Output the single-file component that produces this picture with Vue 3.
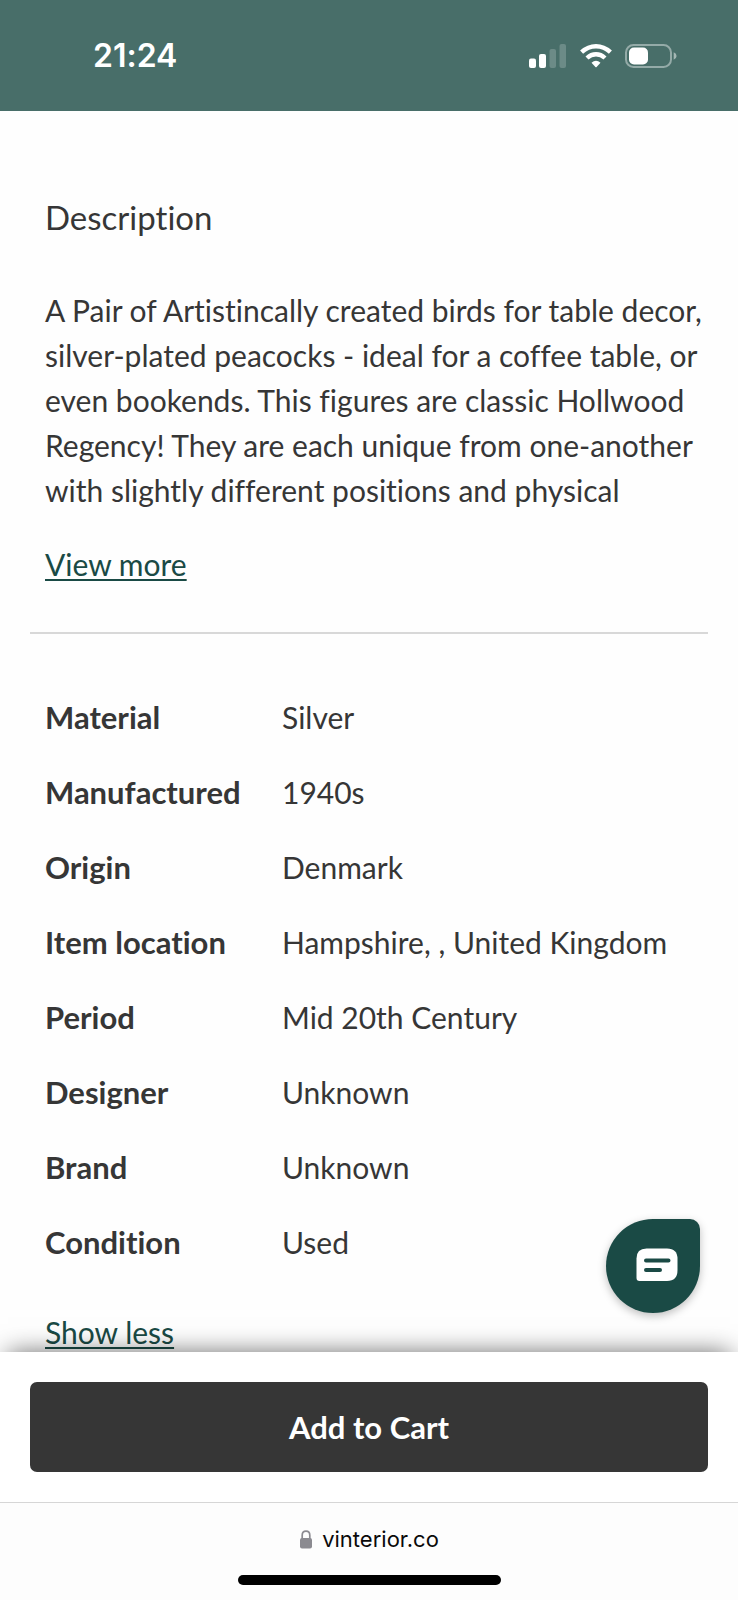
<script setup>
const details = [
  { label: 'Material', value: 'Silver' },
  { label: 'Manufactured', value: '1940s' },
  { label: 'Origin', value: 'Denmark' },
  { label: 'Item location', value: 'Hampshire, , United Kingdom' },
  { label: 'Period', value: 'Mid 20th Century' },
  { label: 'Designer', value: 'Unknown' },
  { label: 'Brand', value: 'Unknown' },
  { label: 'Condition', value: 'Used' },
]
</script>

<template>
  <div class="page">
    <header class="status">
      <time class="clock">21:24</time>
      <div class="indicators">
        <svg width="38" height="24" viewBox="0 0 38 24" fill="#fff" aria-label="Signal">
          <rect x="0" y="14.5" width="7" height="9.5" rx="2" />
          <rect x="10" y="10" width="7" height="14" rx="2" />
          <rect x="20.5" y="5" width="6.5" height="19" rx="2" opacity=".2" />
          <rect x="30.5" y="0" width="6.5" height="24" rx="2" opacity=".2" />
        </svg>
        <svg width="32" height="24" viewBox="0 0 32 24" aria-label="Wi-Fi">
          <g fill="none" stroke="#fff" stroke-width="4.4">
            <path d="M1.6 8.2Q8 2.2 16 2.2T30.4 8.2" />
            <path d="M7 14Q11 10.2 16 10.2T25 14" />
          </g>
          <path d="M11.5 18.7Q16 14.8 20.5 18.7L16.6 23Q16 23.5 15.4 23Z" fill="#fff" />
        </svg>
        <svg width="52" height="24" viewBox="0 0 52 24" aria-label="Battery">
          <rect x="1" y="1" width="45" height="22" rx="7.5" fill="none" stroke="#fff" stroke-opacity=".42" stroke-width="2" />
          <rect x="4" y="3.5" width="19" height="17" rx="5" fill="#fff" />
          <path d="M48.7 8.2Q51.6 9.5 51.6 12T48.7 15.8Z" fill="#fff" opacity=".5" />
        </svg>
      </div>
    </header>

    <main class="content">
      <section class="description">
        <h1>Description</h1>
        <p>
          A Pair of Artistincally created birds for table decor,<br />
          silver-plated peacocks - ideal for a coffee table, or<br />
          even bookends. This figures are classic Hollwood<br />
          Regency! They are each unique from one-another<br />
          with slightly different positions and physical
        </p>
        <a class="toggle" href="#">View more</a>
      </section>

      <section class="details">
        <table>
          <tbody>
            <tr v-for="row in details" :key="row.label">
              <th scope="row">{{ row.label }}</th>
              <td>{{ row.value }}</td>
            </tr>
          </tbody>
        </table>
        <a class="toggle" href="#">Show less</a>
      </section>
    </main>

    <button class="chat" type="button" aria-label="Open chat">
      <svg width="42" height="34" viewBox="0 0 42 34">
        <path d="M10.5 .5H31Q41.5 .5 41.5 11V22Q41.5 33 31 33H3.5Q.5 33 .5 30V10.5Q.5 .5 10.5 .5Z" fill="#fff" />
        <path d="M10 12.5H32.5M10 22H24" stroke="#1a4a45" stroke-width="4" stroke-linecap="round" />
      </svg>
    </button>

    <div class="purchase">
      <button class="add" type="button">Add to Cart</button>
    </div>

    <footer class="browser">
      <div class="address">
        <svg width="14" height="19" viewBox="0 0 14 19">
          <path d="M3.2 9V5.2Q3.2 1.2 7 1.2T10.8 5.2V9" fill="none" stroke="#8b8a90" stroke-width="1.7" />
          <rect x="1" y="8" width="12" height="10.5" rx="2" fill="#8b8a90" />
        </svg>
        <span>vinterior.co</span>
      </div>
      <div class="home"></div>
    </footer>
  </div>
</template>

<style>
body {
  margin: 0;
  background: #fefefe;
}
</style>

<style scoped>
.page {
  display: flex;
  flex-direction: column;
  min-height: 100vh;
  color: #363636;
  font-family: Lato, "Liberation Sans", sans-serif;
  font-size: 30px;
  line-height: 45px;
  font-variant-ligatures: none;
}
.status {
  box-sizing: border-box;
  height: 111px;
  padding: 0 61px 0 93px;
  display: flex;
  align-items: center;
  justify-content: space-between;
  background: #486e69;
  color: #fff;
}
.clock {
  font-family: Inter, sans-serif;
  font-size: 32px;
  font-weight: 600;
}
.indicators {
  display: flex;
  gap: 13px;
}
.indicators svg {
  display: block;
}
.content {
  flex: 1;
  padding: 0 30px;
}
.description {
  padding: 84px 15px 50px;
  border-bottom: 2px solid #d8d8d8;
}
h1 {
  margin: 0 0 49px;
  font-size: 33px;
  line-height: 44px;
  font-weight: 400;
}
p {
  margin: 0 0 33px;
  white-space: nowrap;
}
.toggle {
  display: block;
  width: fit-content;
  line-height: 36px;
  color: #1a4a45;
  text-decoration-thickness: 2px;
  text-underline-offset: 3px;
  text-decoration-skip-ink: none;
}
.details {
  padding: 46px 15px 0;
}
table {
  width: 100%;
  border-collapse: collapse;
}
th,
td {
  padding: 15px 0;
  text-align: left;
  font-weight: 400;
}
th {
  width: 237px;
  font-size: 31px;
  font-weight: 700;
}
.details .toggle {
  margin-top: 34px;
}
.chat {
  position: fixed;
  right: 38px;
  bottom: 287px;
  z-index: 2;
  width: 94px;
  height: 94px;
  padding: 0 0 2px 7px;
  border: 0;
  border-radius: 50% 10px 50% 50%;
  background: #1a4a45;
  box-shadow: 0 3px 8px rgba(0, 0, 0, 0.25);
  display: flex;
  align-items: center;
  justify-content: center;
}
.purchase {
  position: relative;
  z-index: 1;
  padding: 30px;
  background: #fff;
  box-shadow: 0 -7px 24px -8px rgba(0, 0, 0, 0.6);
}
.add {
  display: block;
  width: 100%;
  height: 90px;
  border: 0;
  border-radius: 7px;
  background: #363636;
  color: #fff;
  font: inherit;
  font-size: 31px;
  font-weight: 700;
}
.browser {
  position: relative;
  z-index: 1;
  border-top: 1px solid #d6d6d6;
  background: #fdfdfd;
  padding: 20px 0 15px;
  display: flex;
  flex-direction: column;
  align-items: center;
  gap: 20px;
}
.address {
  display: flex;
  align-items: center;
  gap: 9px;
  color: #0a0a0a;
  font-family: Inter, sans-serif;
  font-size: 22px;
  line-height: 32px;
}
.home {
  width: 263px;
  height: 10px;
  border-radius: 5px;
  background: #000;
}
</style>
